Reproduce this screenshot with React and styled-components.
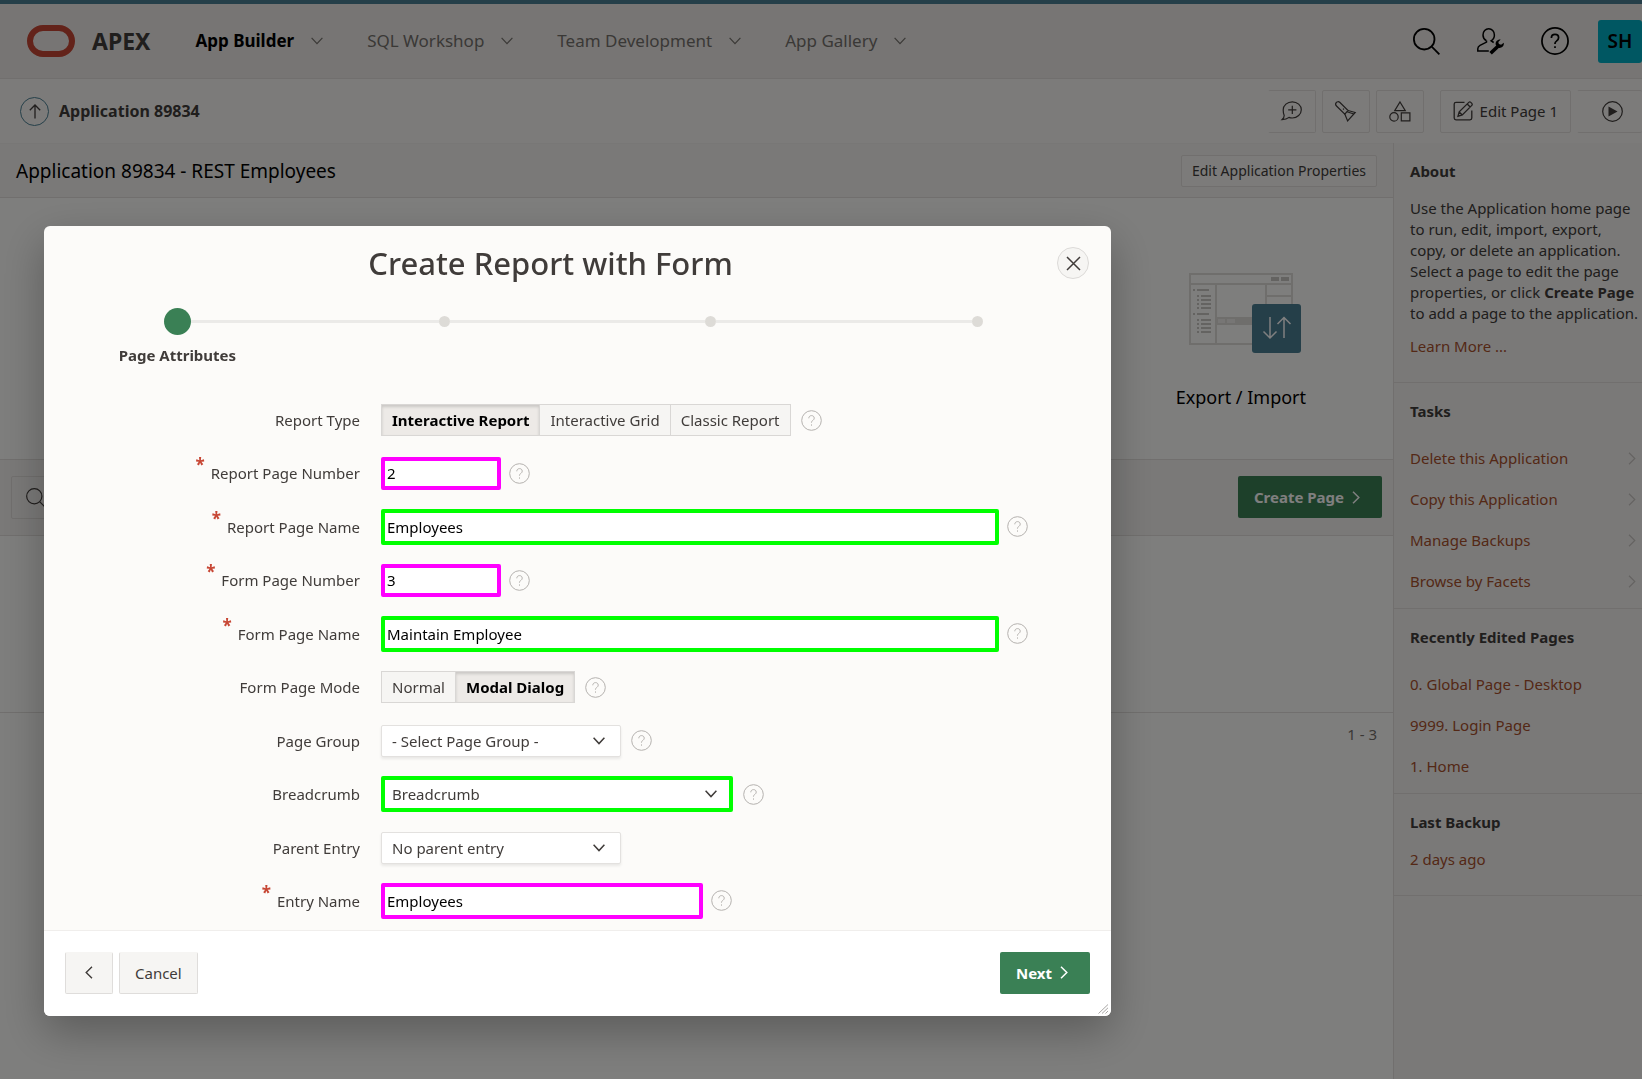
import React, { useState } from "react";
import styled, { createGlobalStyle, css } from "styled-components";

const color = {
  text: "#403c3a",
  strong: "#000000",
  muted: "#75716d",
  link: "#a8502c",
  teal: "#4a7f93",
  green: "#3a8055",
  line: "#e2dfdc",
  bar: "#eeebe8",
  side: "#f5f3f1",
  paper: "#fdfcfa",
  magenta: "#ff00ff",
  lime: "#00ff00",
};

const GlobalStyle = createGlobalStyle`
  *, *::before, *::after { box-sizing: border-box; }
  body {
    margin: 0;
    background: ${color.paper};
    color: ${color.text};
    font-family: "Noto Sans", "Open Sans", sans-serif;
    font-size: 15px;
    line-height: 20px;
  }
  button, input, select { font: inherit; color: inherit; margin: 0; }
  button { cursor: pointer; }
  a { color: inherit; text-decoration: none; }
  h1, h2, h3, p, ul { margin: 0; padding: 0; }
  ul { list-style: none; }
`;

/* ---------- icons ---------- */

const Svg = styled.svg`
  display: block;
  flex: none;
  overflow: visible;
  fill: none;
  stroke: currentColor;
  stroke-width: ${(p) => p.$stroke || 1};
`;

const ChevronDown = ({ stroke = 1.2 }) => (
  <Svg width="12" height="8" viewBox="0 0 12 8" $stroke={stroke} aria-hidden="true">
    <path d="M.6 .8 6 6.6 11.4 .8" />
  </Svg>
);

const ChevronRight = ({ stroke = 1.2 }) => (
  <Svg width="8" height="13" viewBox="0 0 8 13" $stroke={stroke} aria-hidden="true">
    <path d="M1 .8 6.8 6.5 1 12.2" />
  </Svg>
);

const ChevronLeft = () => (
  <Svg width="8" height="13" viewBox="0 0 8 13" $stroke={1.4} aria-hidden="true">
    <path d="M7 .8 1.2 6.5 7 12.2" />
  </Svg>
);

const SearchIcon = ({ size = 27, stroke = 1.8 }) => (
  <Svg width={size} height={size} viewBox="0 0 27 27" $stroke={stroke} aria-hidden="true">
    <circle cx="11.2" cy="11.2" r="10.3" />
    <path d="m18.7 18.7 7.7 7.7" />
  </Svg>
);

const AdminIcon = () => (
  <Svg width="27" height="27" viewBox="0 0 27 27" $stroke={1.5} aria-hidden="true">
    <path d="M9.3 12.7C7.3 11.4 6 9.3 6 6.9 6 3.5 8.5.8 11.7.8s5.7 2.7 5.7 6.100c0 2.500-1.300 4.700-3.300 5.900l2.600 1.700" />
    <path d="M9.500 12.500v1.600L3 17.300C1.600 18 .8 19.200.8 20.700v2.200h11" />
    <path d="m13.600 25.300 7.400-7.100" strokeWidth="3.600" />
    <path d="M23.700 11.600c-3.300-.3-5.700 2.300-4.900 5.300l2.800 3c3 .5 5.700-1.800 5.200-5.100l-2.700 1.900-2.200-.6-.6-2.200z" fill="currentColor" stroke="none" />
  </Svg>
);

const QuestionIcon = ({ size = 21, stroke = 1 }) => (
  <Svg width={size} height={size} viewBox="0 0 21 21" $stroke={stroke} aria-hidden="true">
    <circle cx="10.500" cy="10.500" r="9.800" />
    <path d="M7.800 8.300c0-1.600 1.100-2.700 2.700-2.700s2.700 1 2.700 2.500c0 1.300-.8 1.900-1.600 2.500-.7.500-1.100.9-1.100 1.700v.5" />
    <path d="M10.500 14.400v1.300" />
  </Svg>
);

const UpIcon = () => (
  <Svg width="12" height="15" viewBox="0 0 12 15" $stroke={1.300} aria-hidden="true">
    <path d="M6 14.500V1.200M.8 6.200 6 1l5.200 5.200" />
  </Svg>
);

const FeedbackIcon = () => (
  <Svg width="21" height="20" viewBox="0 0 21 20" $stroke={1.200} aria-hidden="true">
    <path d="M11.300.8c5 0 9 3.600 9 8s-4 8.200-9 8.200c-1.200 0-2.300-.2-3.300-.6-1.800 1.600-4.300 2.300-7 2.300 1.300-1.200 2.200-2.700 2.200-4.300-.7-1.600-1-3.500-1-5.500C2.200 4.400 6.300.8 11.300.8z" />
    <path d="M11.300 4.800v8.200M7.200 8.900h8.200" />
  </Svg>
);

const FlashlightIcon = () => (
  <Svg width="21" height="21" viewBox="0 0 21 21" $stroke={1.200} aria-hidden="true">
    <path d="M1.200 1.600c.9-1 2.500-1.200 3.500-.3l8.400 8.200-3.300 3.600L1.500 5C.5 4 .4 2.600 1.200 1.600z" />
    <path d="m13.100 9.500 7.100 2-7.600 8.400-2.800-6.800M12 10.800l6.800 2.200M8 7.600l.9.900" />
  </Svg>
);

const ShapesIcon = () => (
  <Svg width="22" height="21" viewBox="0 0 22 21" $stroke={1.200} aria-hidden="true">
    <path d="m11 1 5.300 8.700H5.700z" />
    <circle cx="5" cy="15.900" r="4.200" />
    <path d="M12.300 11.900h8.600v8h-8.600z" />
  </Svg>
);

const EditIcon = () => (
  <Svg width="20" height="20" viewBox="0 0 20 20" $stroke={1.300} aria-hidden="true">
    <path d="M11.500 1.300H3A1.800 1.800 0 0 0 1.200 3v14A1.800 1.800 0 0 0 3 18.800h14a1.800 1.800 0 0 0 1.800-1.800V9.500" />
    <path d="m5 15.200 1.200-4.300L15.800 1.400c.6-.6 1.400-.6 2 0l1 1c.6.6.6 1.400 0 2L9.300 14zM14.200 3l3 3M6.200 10.900 9.300 14" />
  </Svg>
);

const PlayIcon = () => (
  <Svg width="21" height="21" viewBox="0 0 21 21" $stroke={1.200} aria-hidden="true">
    <circle cx="10.500" cy="10.500" r="9.800" />
    <path d="m6.500 5.500 9 5-9 5z" fill="currentColor" stroke="none" />
  </Svg>
);

const CloseIcon = () => (
  <Svg width="15" height="15" viewBox="0 0 15 15" $stroke={1.500} aria-hidden="true">
    <path d="m1 1 13 13M14 1 1 14" />
  </Svg>
);

const OracleMark = () => (
  <Svg width="48" height="32" viewBox="0 0 48 32" aria-label="Oracle" role="img">
    <rect x="3" y="3" width="42" height="26" rx="13" stroke="#c74634" strokeWidth="6" />
  </Svg>
);

const ResizeGrip = () => (
  <Svg width="11" height="10" viewBox="0 0 11 10" aria-hidden="true">
    <path d="M.5 9.500 10 .5M4 9.500 10 3.800M7.500 9.500 10 7" stroke="#a8a6a4" />
  </Svg>
);

const treeRows = [
  [0, 16], [4, 22], [4, 26], [4, 30], [4, 34],
  [0, 40], [4, 46], [4, 50], [4, 54], [4, 58],
];

const ExportArt = () => (
  <Svg width="104" height="80" viewBox="0 0 104 80" stroke="none" aria-hidden="true">
    <g stroke="#dedcd9" strokeWidth="2">
      <path d="M1 1h102v70H1zM1 11h102M27 11v60M77 11v36M77 23h26" />
    </g>
    <g stroke="none">
      <path d="M28 44h36v8H28z" fill="#dedcd9" />
      <path d="M29 46h7v4h-7zM38 46h8v4h-8z" fill="#efedea" />
      <path d="M82 4h8v4h-8zM92 4h8v4h-8z" fill="#c9c6c3" />
      {treeRows.map(([indent, y]) => (
        <path key={y} d={`M${4 + indent} ${y}h2v2h-2zM${8 + indent} ${y}h${indent ? 10 : 12}v2h-${indent ? 10 : 12}z`} fill="#c9c6c3" />
      ))}
      <rect x="63" y="31" width="49" height="49" rx="3" fill={color.teal} />
    </g>
    <path d="M81 44v20.500M74.500 58.500 81 65l6.500-6.500M95 65V44.500M88.500 51 95 44.500l6.500 6.500" stroke="#ffffff" strokeWidth="1.500" />
  </Svg>
);

/* ---------- page ---------- */

const Page = styled.div`
  display: flex;
  flex-direction: column;
  min-height: 100vh;
`;

const Header = styled.header`
  display: flex;
  align-items: center;
  height: 79px;
  padding-left: 27px;
  background: ${color.bar};
  border-top: 4px solid ${color.teal};
  border-bottom: 1px solid ${color.line};
`;

const Brand = styled.a`
  display: flex;
  align-items: center;
  gap: 17px;
  color: ${color.text};
  font-size: 23px;
  font-weight: 700;
  line-height: 32px;
`;

const Nav = styled.nav`
  display: flex;
  flex: 1;
  gap: 44px;
  padding-left: 45px;
`;

const NavItem = styled.button`
  display: flex;
  align-items: center;
  gap: 17px;
  padding: 0;
  border: 0;
  background: none;
  color: ${(p) => (p.$current ? color.strong : color.muted)};
  font-size: 17px;
  font-weight: ${(p) => (p.$current ? 700 : 400)};
  line-height: 24px;
  white-space: nowrap;
  svg { color: #75716d; }
`;

const HeaderActions = styled.div`
  display: flex;
  gap: 37px;
  padding-right: 29px;
`;

const IconButton = styled.button`
  display: grid;
  place-items: center;
  padding: 0;
  border: 0;
  background: none;
  color: ${(p) => (p.$pale ? "#b5b2af" : color.strong)};
`;

const Avatar = styled.button`
  width: 44px;
  height: 43px;
  padding: 0;
  border: 0;
  border-radius: 3px;
  background: #00aec4;
  color: ${color.strong};
  font-size: 19px;
  font-weight: 600;
`;

const PageBar = styled.div`
  display: flex;
  align-items: center;
  height: 64px;
  padding-left: 20px;
  background: #f9f7f5;
`;

const Breadcrumb = styled.a`
  display: flex;
  flex: 1;
  align-items: center;
  gap: 10px;
  font-size: 16px;
  font-weight: 700;
`;

const UpCircle = styled.span`
  display: grid;
  place-items: center;
  width: 29px;
  height: 29px;
  border: 1px solid ${color.teal};
  border-radius: 50%;
`;

const BarActions = styled.div`
  display: flex;
  gap: 6px;
  margin-right: ${(p) => (p.$spaced ? 16 : 0)}px;
`;

const BarButton = styled.button`
  display: flex;
  align-items: center;
  justify-content: ${(p) => (p.$open === "end" ? "flex-start" : "center")};
  gap: 7px;
  min-width: ${(p) => (p.$open === "end" ? 65 : 48)}px;
  height: 43px;
  padding: 0 ${(p) => (p.$open === "end" ? 24 : 12)}px;
  border: 1px solid ${color.line};
  border-radius: 2px;
  background: none;
  ${(p) => p.$open && css`border-left-color: transparent;`}
  ${(p) => p.$open === "end" && css`border-right: 0; padding-right: 0;`}
`;

const Body = styled.div`
  display: grid;
  flex: 1;
  grid-template-columns: minmax(0, 1fr) 249px;
`;

const Main = styled.main`
  min-width: 0;
`;

const TitleBar = styled.div`
  display: flex;
  align-items: center;
  justify-content: space-between;
  height: 55px;
  padding: 0 16px;
  background: ${color.side};
  border-top: 1px solid #f1eeec;
  border-bottom: 1px solid ${color.line};
`;

const PageTitle = styled.h1`
  color: ${color.strong};
  font-size: 19px;
  font-weight: 400;
  line-height: 24px;
`;

const SmallButton = styled.button`
  height: 32px;
  padding: 0 10px;
  border: 1px solid ${color.line};
  border-radius: 2px;
  background: #f9f7f5;
  font-size: 14px;
`;

const Cards = styled.section`
  display: grid;
  grid-template-columns: repeat(5, minmax(0, 1fr));
  padding: 75px 16px 50px;
`;

const Card = styled.a`
  display: flex;
  grid-column: 5;
  flex-direction: column;
  align-items: center;
  gap: 33px;
  color: ${color.strong};
  font-size: 18px;
  line-height: 23px;
`;

const ReportBar = styled.div`
  display: flex;
  justify-content: space-between;
  padding: 16px 11px;
  background: ${color.side};
  border-top: 1px solid ${color.line};
  border-bottom: 1px solid ${color.line};
`;

const SearchBox = styled.label`
  display: flex;
  align-items: center;
  width: 320px;
  height: 43px;
  padding: 0 14px;
  border: 1px solid ${color.line};
  border-radius: 2px;
`;

const BareInput = styled.input`
  flex: 1;
  min-width: 0;
  border: 0;
  outline: 0;
  background: none;
`;

const PrimaryButton = styled.button`
  display: flex;
  align-items: center;
  gap: 8px;
  height: 42px;
  padding: 0 22px 0 16px;
  border: 0;
  border-radius: 2px;
  background: ${color.green};
  color: #ffffff;
  font-weight: 700;
`;

const ReportRows = styled.div`
  height: 177px;
  border-bottom: 1px solid ${color.line};
`;

const Pagination = styled.p`
  padding: 11px 16px;
  color: ${color.muted};
  text-align: right;
`;

const Sidebar = styled.aside`
  background: ${color.side};
  border-left: 1px solid ${color.line};
`;

const SideSection = styled.section`
  padding: 18px 0 ${(p) => (p.$list ? 6 : 25)}px 16px;
  border-bottom: 1px solid ${color.line};
`;

const SideTitle = styled.h2`
  margin-bottom: 17px;
  font-size: 15px;
  font-weight: 700;
  line-height: 20px;
`;

const SideText = styled.p`
  margin-bottom: 12px;
  padding-right: 3px;
  line-height: 21px;
`;

const SideLink = styled.a`
  display: flex;
  align-items: center;
  justify-content: space-between;
  padding-right: 6px;
  color: ${color.link};
  line-height: ${(p) => (p.$row ? 41 : 21)}px;
  svg { color: #c9c6c3; }
`;

/* ---------- dialog ---------- */

const Overlay = styled.div`
  position: fixed;
  inset: 0;
  padding: 226px 44px 0;
  background: rgba(0, 0, 0, 0.5);
`;

const Dialog = styled.section`
  display: flex;
  flex-direction: column;
  width: 1067px;
  max-width: 100%;
  min-height: 790px;
  overflow: hidden;
  border-radius: 6px;
  background: #fcfbf9;
  box-shadow: 0 16px 44px rgba(0, 0, 0, 0.28);
`;

const DialogHeader = styled.header`
  display: flex;
  align-items: center;
  padding: 16px 22px 0 0;
`;

const DialogTitle = styled.h2`
  flex: 1;
  font-size: 31px;
  font-weight: 500;
  line-height: 42px;
  text-align: center;
`;

const CloseButton = styled.button`
  display: grid;
  place-items: center;
  width: 32px;
  height: 32px;
  padding: 0;
  border: 1px solid #dcdad8;
  border-radius: 50%;
  background: #f6f5f3;
`;

const Steps = styled.ol`
  display: grid;
  grid-template-columns: repeat(4, 1fr);
  margin: 24px 0 0;
  padding: 0;
  list-style: none;
`;

const Step = styled.li`
  display: flex;
  flex-direction: column;
  gap: 10px;
  font-weight: 700;
  text-align: center;
`;

const Track = styled.span`
  display: flex;
  align-items: center;
  height: 27px;
`;

const TrackLine = styled.span`
  flex: 1;
  height: 3px;
  background: ${(p) => (p.$hidden ? "transparent" : "#ebeae8")};
`;

const Dot = styled.span`
  width: ${(p) => (p.$current ? 27 : 11)}px;
  height: ${(p) => (p.$current ? 27 : 11)}px;
  border-radius: 50%;
  background: ${(p) => (p.$current ? color.green : "#dddbd7")};
`;

const Form = styled.form`
  display: flex;
  flex: 1;
  flex-direction: column;
  justify-content: space-between;
  padding: 37px 0 11px;
`;

const Field = styled.div`
  display: grid;
  grid-template-columns: 316px 1fr;
  column-gap: 21px;
  align-items: center;
  height: 36px;
`;

const LabelCell = styled.div`
  display: flex;
  align-items: center;
  justify-content: flex-end;
  height: 36px;
`;

const Required = styled.span`
  align-self: flex-start;
  margin-right: 6px;
  color: #c74634;
  font-weight: 700;
  font-size: 17px;
`;

const ControlCell = styled.div`
  display: flex;
  align-items: center;
  gap: ${(p) => (p.$tight ? 8 : 10)}px;
`;

const TextInput = styled.input`
  width: ${(p) => p.$width}px;
  height: ${(p) => (p.$width > 200 ? 36 : 33)}px;
  padding: 0 2px;
  border: 4px solid ${(p) => color[p.$mark]};
  border-radius: 2px;
  outline: 0;
  background: #ffffff;
  color: ${color.strong};
`;

const SelectWrap = styled.span`
  display: grid;
  align-items: center;
  justify-items: end;
  > * { grid-area: 1 / 1; }
  svg { margin-right: 16px; pointer-events: none; }
`;

const Select = styled.select`
  width: ${(p) => p.$width}px;
  height: ${(p) => (p.$mark ? 36 : 32)}px;
  padding: 0 30px 0 ${(p) => (p.$mark ? 7 : 10)}px;
  appearance: none;
  border: 1px solid #e3e1df;
  border-radius: 2px;
  outline: 0;
  background: #ffffff;
  box-shadow: 0 2px 3px rgba(0, 0, 0, 0.08);
  ${(p) => p.$mark && css`border: 4px solid ${color[p.$mark]}; box-shadow: none;`}
`;

const Pills = styled.div`
  display: flex;
  height: 32px;
  border: 1px solid #d9d7d5;
`;

const Pill = styled.label`
  display: flex;
  align-items: center;
  padding: 0 10px;
  background: #f6f5f3;
  cursor: pointer;
  & + & { border-left: 1px solid #d9d7d5; }
  &:has(input:checked) {
    background: #edeae7;
    box-shadow: inset 0 2px 3px rgba(0, 0, 0, 0.15);
    color: ${color.strong};
    font-weight: 700;
  }
`;

const PillInput = styled.input`
  width: 0;
  height: 0;
  appearance: none;
`;

const DialogFooter = styled.footer`
  display: flex;
  align-items: center;
  gap: 6px;
  height: 86px;
  padding: 0 21px 2px;
  border-top: 1px solid #f0eeec;
  background: #ffffff;
`;

const PlainButton = styled.button`
  display: grid;
  place-items: center;
  min-width: 48px;
  height: 42px;
  padding: 0 15px;
  border: 1px solid #dfdddb;
  border-top-color: #f6f5f3;
  border-radius: 2px;
  background: #f6f5f3;
`;

const Spacer = styled.span`
  flex: 1;
`;

const Grip = styled.span`
  position: absolute;
  right: 2px;
  bottom: 2px;
`;

const DialogFrame = styled.div`
  position: relative;
  width: max-content;
  max-width: 100%;
`;

/* ---------- data ---------- */

const menus = ["App Builder", "SQL Workshop", "Team Development", "App Gallery"];
const tasks = ["Delete this Application", "Copy this Application", "Manage Backups", "Browse by Facets"];
const recent = ["0. Global Page - Desktop", "9999. Login Page", "1. Home"];

const fields = [
  { id: "type", label: "Report Type", kind: "pills", options: ["Interactive Report", "Interactive Grid", "Classic Report"], value: "Interactive Report", help: true },
  { id: "report-number", label: "Report Page Number", kind: "text", required: true, value: "2", width: 120, mark: "magenta", help: true },
  { id: "report-name", label: "Report Page Name", kind: "text", required: true, value: "Employees", width: 618, mark: "lime", help: true },
  { id: "form-number", label: "Form Page Number", kind: "text", required: true, value: "3", width: 120, mark: "magenta", help: true },
  { id: "form-name", label: "Form Page Name", kind: "text", required: true, value: "Maintain Employee", width: 618, mark: "lime", help: true },
  { id: "mode", label: "Form Page Mode", kind: "pills", options: ["Normal", "Modal Dialog"], value: "Modal Dialog", help: true },
  { id: "group", label: "Page Group", kind: "select", value: "- Select Page Group -", width: 240, help: true },
  { id: "breadcrumb", label: "Breadcrumb", kind: "select", value: "Breadcrumb", width: 352, mark: "lime", help: true },
  { id: "parent", label: "Parent Entry", kind: "select", value: "No parent entry", width: 240 },
  { id: "entry", label: "Entry Name", kind: "text", required: true, value: "Employees", width: 322, mark: "magenta", help: true },
];

function Control({ field }) {
  const [value, setValue] = useState(field.value);
  const onChange = (e) => setValue(e.target.value);

  if (field.kind === "pills") {
    return (
      <Pills role="radiogroup" aria-labelledby={`${field.id}-label`}>
        {field.options.map((option) => (
          <Pill key={option}>
            <PillInput type="radio" name={field.id} value={option} checked={value === option} onChange={onChange} />
            {option}
          </Pill>
        ))}
      </Pills>
    );
  }
  if (field.kind === "select") {
    return (
      <SelectWrap>
        <Select id={field.id} value={value} onChange={onChange} $width={field.width} $mark={field.mark}>
          <option>{field.value}</option>
        </Select>
        <ChevronDown stroke={1.5} />
      </SelectWrap>
    );
  }
  return <TextInput id={field.id} value={value} onChange={onChange} $width={field.width} $mark={field.mark} />;
}

function FieldRow({ field }) {
  return (
    <Field>
      <LabelCell>
        {field.required && <Required aria-hidden="true">*</Required>}
        <label id={`${field.id}-label`} htmlFor={field.kind === "pills" ? undefined : field.id}>{field.label}</label>
      </LabelCell>
      <ControlCell $tight={field.kind === "text"}>
        <Control field={field} />
        {field.help && (
          <IconButton type="button" $pale aria-label={`Help for ${field.label}`}>
            <QuestionIcon />
          </IconButton>
        )}
      </ControlCell>
    </Field>
  );
}

function Wizard() {
  return (
    <DialogFrame>
      <Dialog role="dialog" aria-modal="true" aria-labelledby="wizard-title">
        <DialogHeader>
          <DialogTitle id="wizard-title">Create Report with Form</DialogTitle>
          <CloseButton type="button" aria-label="Close"><CloseIcon /></CloseButton>
        </DialogHeader>
        <Steps>
          {["Page Attributes", "", "", ""].map((name, i) => (
            <Step key={i}>
              <Track>
                <TrackLine $hidden={i === 0} />
                <Dot $current={i === 0} />
                <TrackLine $hidden={i === 3} />
              </Track>
              {name}
            </Step>
          ))}
        </Steps>
        <Form id="wizard" onSubmit={(e) => e.preventDefault()}>
          {fields.map((field) => <FieldRow key={field.id} field={field} />)}
        </Form>
        <DialogFooter>
          <PlainButton type="button" aria-label="Previous"><ChevronLeft /></PlainButton>
          <PlainButton type="button">Cancel</PlainButton>
          <Spacer />
          <PrimaryButton type="submit" form="wizard">Next <ChevronRight stroke={1.5} /></PrimaryButton>
        </DialogFooter>
      </Dialog>
      <Grip><ResizeGrip /></Grip>
    </DialogFrame>
  );
}

export default function App() {
  return (
    <>
      <GlobalStyle />
      <Page>
        <Header>
          <Brand href="#"><OracleMark />APEX</Brand>
          <Nav>
            {menus.map((name, i) => (
              <NavItem key={name} $current={i === 0}>{name}<ChevronDown /></NavItem>
            ))}
          </Nav>
          <HeaderActions>
            <IconButton aria-label="Search"><SearchIcon /></IconButton>
            <IconButton aria-label="Administration"><AdminIcon /></IconButton>
            <IconButton aria-label="Help"><QuestionIcon size={28} stroke={1.3} /></IconButton>
          </HeaderActions>
          <Avatar>SH</Avatar>
        </Header>

        <PageBar>
          <Breadcrumb href="#"><UpCircle><UpIcon /></UpCircle>Application 89834</Breadcrumb>
          <BarActions $spaced>
            <BarButton $open="start" aria-label="Feedback"><FeedbackIcon /></BarButton>
            <BarButton aria-label="Find"><FlashlightIcon /></BarButton>
            <BarButton aria-label="Shared components"><ShapesIcon /></BarButton>
          </BarActions>
          <BarActions>
            <BarButton><EditIcon />Edit Page 1</BarButton>
            <BarButton $open="end" aria-label="Run"><PlayIcon /></BarButton>
          </BarActions>
        </PageBar>

        <Body>
          <Main>
            <TitleBar>
              <PageTitle>Application 89834 - REST Employees</PageTitle>
              <SmallButton>Edit Application Properties</SmallButton>
            </TitleBar>
            <Cards>
              <Card href="#"><ExportArt />Export / Import</Card>
            </Cards>
            <ReportBar>
              <SearchBox aria-label="Search pages">
                <SearchIcon size={20} stroke={1.6} />
                <BareInput type="search" />
              </SearchBox>
              <PrimaryButton>Create Page <ChevronRight stroke={1.5} /></PrimaryButton>
            </ReportBar>
            <ReportRows />
            <Pagination>1 - 3</Pagination>
          </Main>

          <Sidebar>
            <SideSection>
              <SideTitle>About</SideTitle>
              <SideText>
                Use the Application home page to run, edit, import, export, copy, or delete an application. Select a page
                to edit the page properties, or click <b>Create Page</b> to add a page to the application.
              </SideText>
              <SideLink href="#">Learn More ...</SideLink>
            </SideSection>
            <SideSection $list>
              <SideTitle>Tasks</SideTitle>
              {tasks.map((name) => (
                <SideLink key={name} href="#" $row>{name}<ChevronRight /></SideLink>
              ))}
            </SideSection>
            <SideSection $list>
              <SideTitle>Recently Edited Pages</SideTitle>
              {recent.map((name) => <SideLink key={name} href="#" $row>{name}</SideLink>)}
            </SideSection>
            <SideSection>
              <SideTitle>Last Backup</SideTitle>
              <SideLink href="#">2 days ago</SideLink>
            </SideSection>
          </Sidebar>
        </Body>
      </Page>
      <Overlay><Wizard /></Overlay>
    </>
  );
}
